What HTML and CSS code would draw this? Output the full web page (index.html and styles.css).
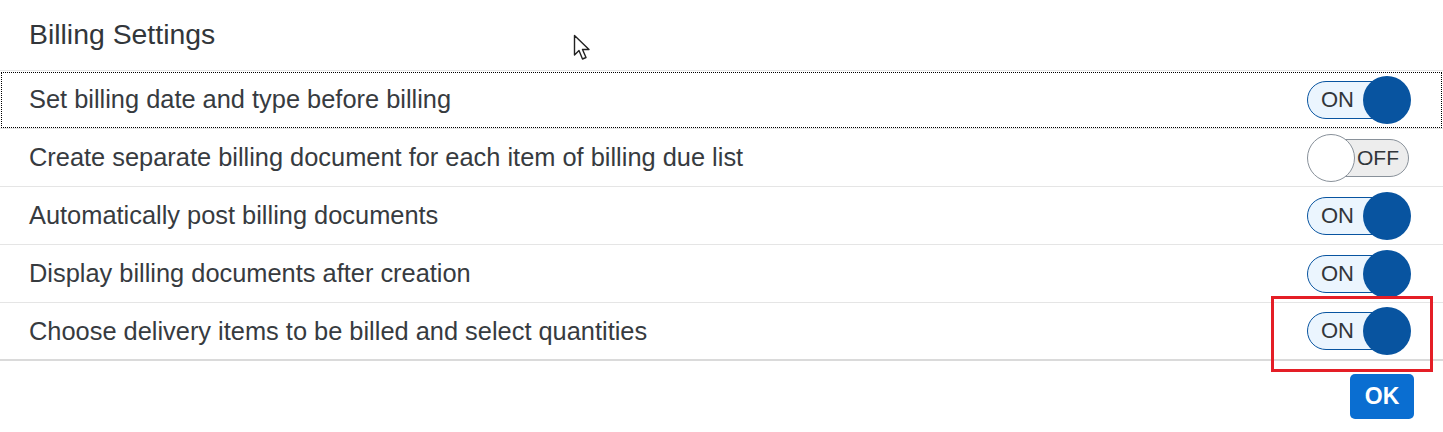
FILE: index.html
```html
<!DOCTYPE html>
<html lang="en">
<head>
<meta charset="utf-8">
<title>Billing Settings</title>
<link rel="stylesheet" href="styles.css">
</head>
<body>
<div class="dialog">
  <header class="dialog-header">
    <h1 class="dialog-title">Billing Settings</h1>
  </header>
  <ul class="settings">
    <li class="setting focused">
      <span class="label">Set billing date and type before billing</span>
      <span class="switch on"><span class="track"><span class="state">ON</span></span><span class="knob"></span></span>
    </li>
    <li class="setting">
      <span class="label">Create separate billing document for each item of billing due list</span>
      <span class="switch off"><span class="track"><span class="state">OFF</span></span><span class="knob"></span></span>
    </li>
    <li class="setting">
      <span class="label">Automatically post billing documents</span>
      <span class="switch on"><span class="track"><span class="state">ON</span></span><span class="knob"></span></span>
    </li>
    <li class="setting">
      <span class="label">Display billing documents after creation</span>
      <span class="switch on"><span class="track"><span class="state">ON</span></span><span class="knob"></span></span>
    </li>
    <li class="setting last">
      <span class="label">Choose delivery items to be billed and select quantities</span>
      <span class="switch on"><span class="track"><span class="state">ON</span></span><span class="knob"></span></span>
    </li>
  </ul>
  <footer class="dialog-footer">
    <button class="ok-button" type="button">OK</button>
  </footer>
  <svg class="cursor" width="20" height="28" viewBox="0 0 20 28" aria-hidden="true">
    <path d="M1.5 1.5 L1.5 21 L6 16.5 L9.5 25 L13 23.5 L9.5 15.5 L16 15.5 Z" fill="#fff" stroke="#222" stroke-width="1.4" stroke-linejoin="round"/>
  </svg>
  <div class="highlight"></div>
</div>
</body>
</html>
```

FILE: styles.css
```css
* {
  box-sizing: border-box;
}

html, body {
  margin: 0;
  padding: 0;
  background: #ffffff;
}

body {
  font-family: "Liberation Sans", Arial, sans-serif;
  color: #32363a;
}

.dialog {
  position: relative;
  width: 1443px;
  height: 432px;
  background: #ffffff;
  overflow: hidden;
}

.dialog-header {
  height: 71px;
  padding-left: 29px;
  display: flex;
  align-items: center;
  border-bottom: 1px solid #e5e5e5;
}

.dialog-title {
  margin: 0;
  font-size: 28.4px;
  font-weight: normal;
  color: #32363a;
  padding-bottom: 1px;
}

.settings {
  list-style: none;
  margin: 0;
  padding: 0;
}

.setting {
  height: 58px;
  display: flex;
  align-items: center;
  justify-content: space-between;
  padding-left: 29px;
  padding-right: 32px;
  border-bottom: 1px solid #e5e5e5;
  font-size: 25.4px;
}

.setting.focused {
  outline: 1px dotted #000000;
  outline-offset: -2px;
}

.setting.last {
  border-bottom: 2px solid #dadada;
}

.label {
  color: #373b3f;
}

.switch {
  position: relative;
  width: 104px;
  height: 48px;
  flex: none;
}

.switch .track {
  position: absolute;
  top: 5px;
  height: 38px;
  border-radius: 19px;
  display: flex;
  align-items: center;
}

.switch .state {
  font-size: 22px;
  color: #32363a;
}

.switch .knob {
  position: absolute;
  top: 0;
  width: 48px;
  height: 48px;
  border-radius: 50%;
}

.switch.on .track {
  left: 0;
  right: 16px;
  background: #ebf5fe;
  border: 1.5px solid #0854a0;
  padding-left: 13px;
}

.switch.on .knob {
  right: 0;
  background: #0854a0;
}

.switch.off .track {
  left: 16px;
  right: 2px;
  background: #ededed;
  border: 1.5px solid #89919a;
  justify-content: flex-end;
  padding-right: 9px;
}

.switch.off .state {
  font-size: 21px;
}

.switch.off .knob {
  left: 0;
  background: #ffffff;
  border: 1.5px solid #89919a;
}

.dialog-footer {
  display: flex;
  justify-content: flex-end;
  padding: 13px 29px 0 0;
}

.ok-button {
  width: 64px;
  height: 45px;
  border: none;
  border-radius: 5px;
  background: #0a6ed1;
  color: #ffffff;
  font-family: "Liberation Sans", Arial, sans-serif;
  font-size: 23px;
  font-weight: bold;
  padding: 0;
}

.cursor {
  position: absolute;
  left: 573px;
  top: 34px;
}

.highlight {
  position: absolute;
  left: 1271px;
  top: 296px;
  width: 162px;
  height: 76px;
  border: 3px solid #e41e26;
}
```
